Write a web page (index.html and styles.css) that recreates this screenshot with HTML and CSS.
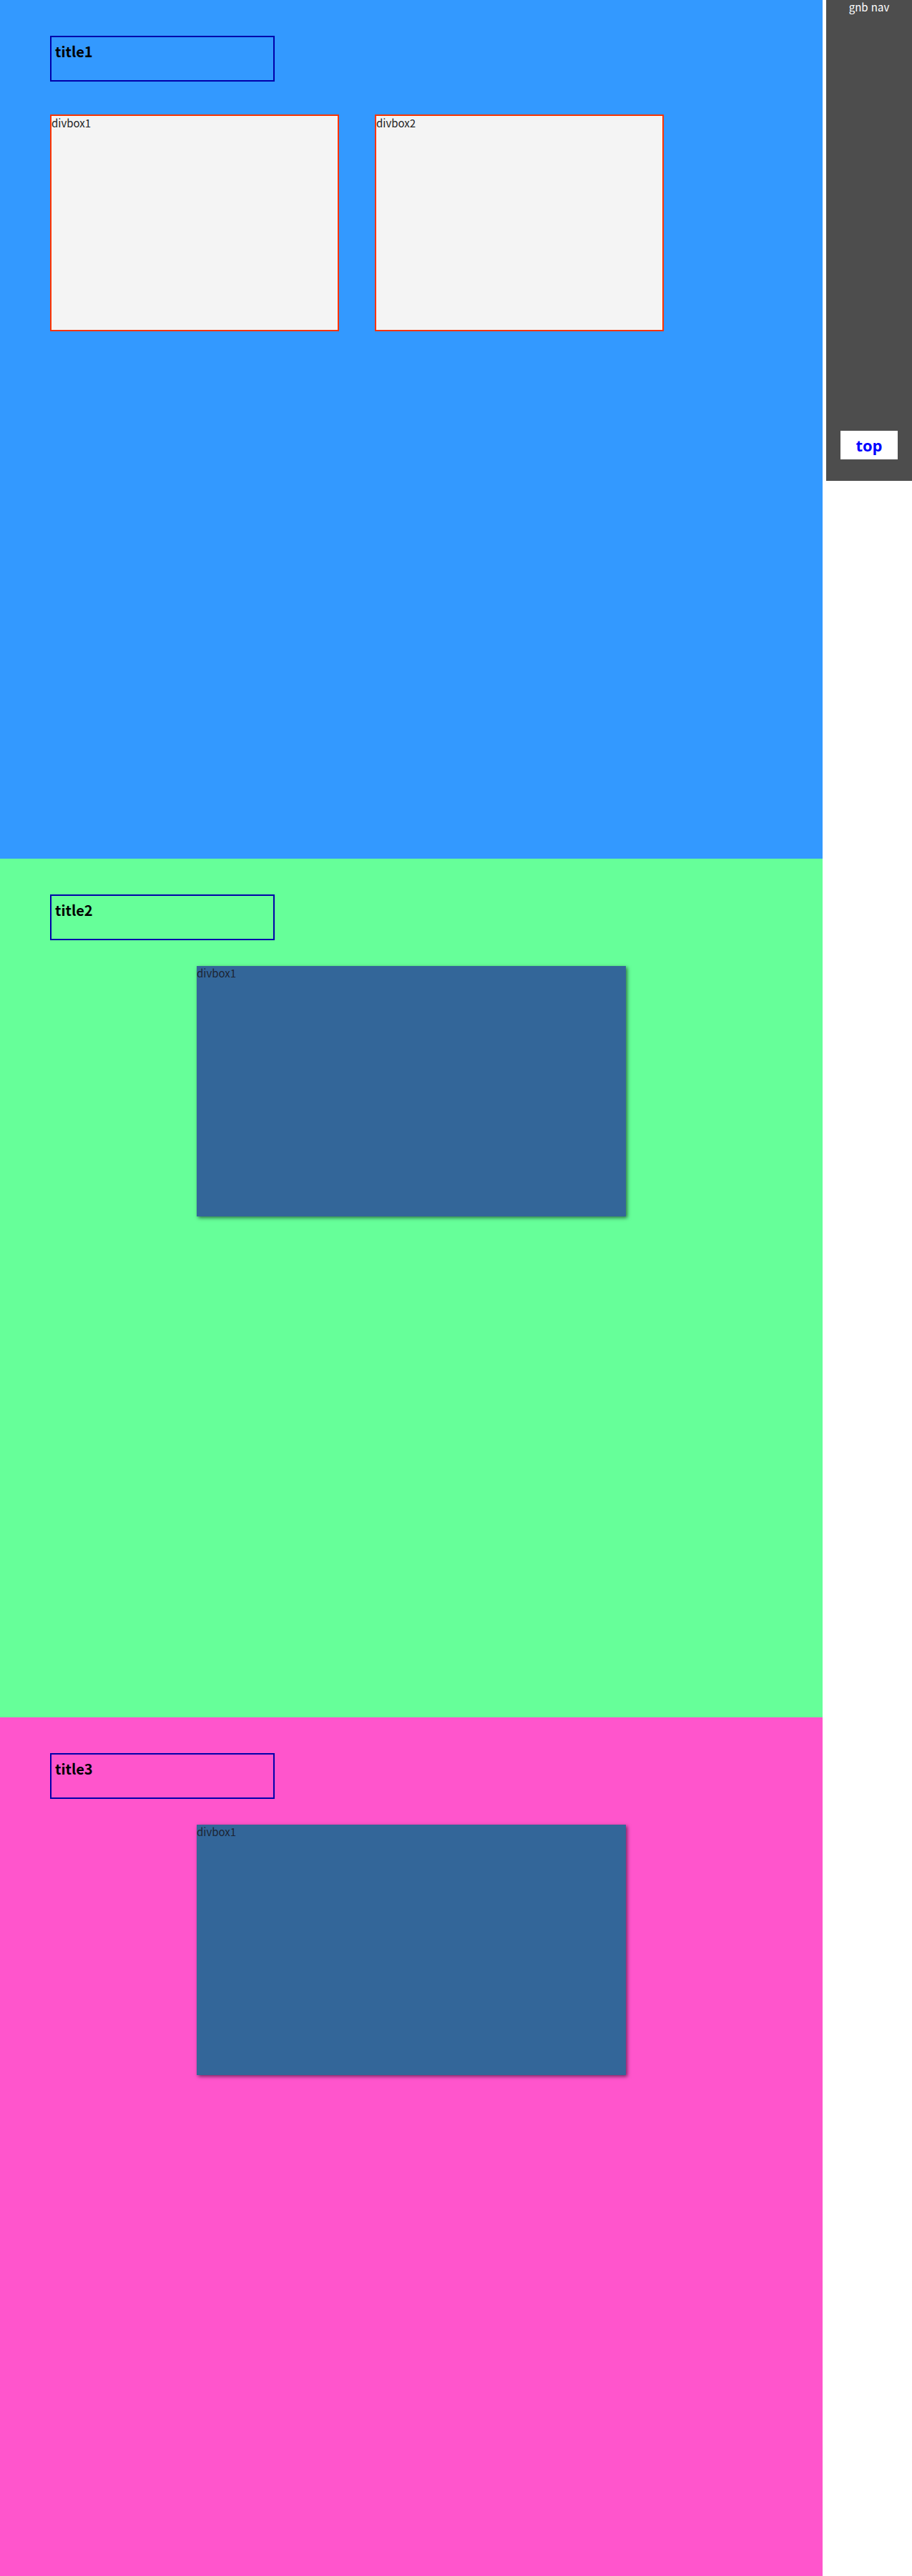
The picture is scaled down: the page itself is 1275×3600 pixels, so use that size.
FILE: index.html
```html
<!DOCTYPE html>
<html lang="ko">
<head>
<meta charset="utf-8">
<title>sections</title>
<link rel="stylesheet" href="styles.css">
</head>
<body>
<div class="page">
  <main class="content">
    <section class="sec sec-1">
      <h2 class="title">title1</h2>
      <div class="row">
        <div class="divbox">divbox1</div>
        <div class="divbox">divbox2</div>
      </div>
    </section>
    <section class="sec sec-2">
      <h2 class="title">title2</h2>
      <div class="card">divbox1</div>
    </section>
    <section class="sec sec-3">
      <h2 class="title">title3</h2>
      <div class="card">divbox1</div>
    </section>
  </main>
  <nav class="gnb">
    <div class="gnb-label">gnb nav</div>
    <a class="top-btn" href="#">top</a>
  </nav>
</div>
</body>
</html>
```

FILE: styles.css
```css
html, body {
  margin: 0;
  padding: 0;
  background: #ffffff;
}

body {
  font-family: "Noto Sans CJK KR", "Noto Sans", sans-serif;
}

.page {
  display: flex;
  align-items: flex-start;
  width: 1275px;
}

.content {
  width: 1150px;
  flex: 0 0 1150px;
}

.sec {
  height: 1200px;
  box-sizing: border-box;
  padding: 50px 0 0 70px;
}

.sec-1 { background: #3399ff; }
.sec-2 { background: #66ff99; }
.sec-3 { background: #ff55cc; }

.title {
  margin: 0;
  box-sizing: content-box;
  border: 2px solid #0000aa;
  font-size: 20px;
  line-height: 24px;
  font-weight: 700;
  color: #000000;
  padding: 8px 0 0 5px;
  width: 305px;
  height: 52px;
}

.row {
  display: flex;
  gap: 50px;
  margin-top: 46px;
}

.divbox {
  width: 400px;
  height: 299px;
  border: 2px solid #ff3300;
  background: #f4f4f4;
  font-size: 15px;
  line-height: 20px;
  color: #222222;
  box-sizing: content-box;
}

.card {
  width: 600px;
  height: 350px;
  margin: 36px 0 0 205px;
  background: #336699;
  box-shadow: 2px 2px 5px rgba(0, 0, 0, 0.55);
  font-size: 15px;
  line-height: 20px;
  color: #1c2433;
}

.gnb {
  flex: 0 0 120px;
  width: 120px;
  height: 672px;
  margin-left: 5px;
  background: #4d4d4d;
  display: flex;
  flex-direction: column;
  align-items: center;
  justify-content: space-between;
  box-sizing: border-box;
  padding-bottom: 30px;
}

.gnb-label {
  color: #ffffff;
  font-size: 15px;
  line-height: 20px;
}

.top-btn {
  display: flex;
  align-items: center;
  justify-content: center;
  width: 80px;
  height: 40px;
  background: #ffffff;
  color: #0000ff;
  font-family: "Open Sans", "Noto Sans", sans-serif;
  font-weight: 700;
  font-size: 22px;
  text-decoration: none;
}
```
